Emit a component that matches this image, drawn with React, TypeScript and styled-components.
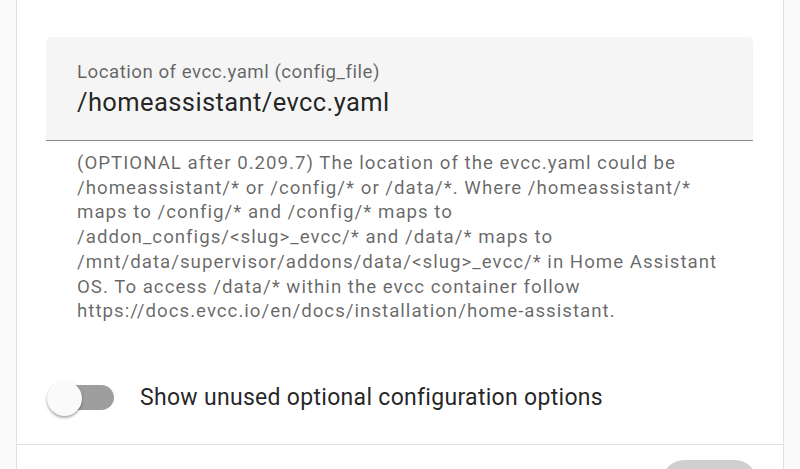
import React, { useState } from 'react';
import styled, { createGlobalStyle } from 'styled-components';

const GlobalStyle = createGlobalStyle`
  html, body {
    margin: 0;
    padding: 0;
    background: #fafafa;
    font-family: Roboto, 'Noto Sans', 'Liberation Sans', sans-serif;
    -webkit-font-smoothing: antialiased;
  }
`;

const PageStyled = styled.div`
  padding: 0 16px;
  height: 469px;
  overflow: hidden;
`;

const CardStyled = styled.div`
  background: #ffffff;
  border-left: 1px solid #e0e0e0;
  border-right: 1px solid #e0e0e0;
  height: 100%;
  display: flex;
  flex-direction: column;
`;

const CardContentStyled = styled.div`
  padding: 37px 30px 0 29px;
`;

const TextFieldStyled = styled.div`
  background: #f5f5f5;
  border-radius: 5px 5px 0 0;
  border-bottom: 1.5px solid #8a8a8a;
  height: 104px;
  box-sizing: border-box;
  padding: 24px 31px 0;
`;

const FieldLabelStyled = styled.div`
  font-size: 18.7px;
  letter-spacing: 0.5px;
  line-height: 22px;
  color: rgba(0, 0, 0, 0.6);
`;

const FieldValueStyled = styled.div`
  margin-top: 3px;
  font-size: 25.5px;
  letter-spacing: 0.4px;
  line-height: 32px;
  color: rgba(0, 0, 0, 0.87);
`;

const HelperTextStyled = styled.div`
  padding: 10px 0 0 31px;
  font-size: 18.7px;
  letter-spacing: 1px;
  line-height: 24.7px;
  color: rgba(0, 0, 0, 0.6);
`;

const ToggleRowStyled = styled.label`
  display: flex;
  align-items: center;
  gap: 26px;
  margin-top: 56px;
  padding-left: 1px;
  cursor: pointer;
`;

const SwitchStyled = styled.span`
  position: relative;
  width: 67px;
  height: 36px;
  flex: none;
  display: flex;
  align-items: center;
  justify-content: flex-end;
`;

const TrackStyled = styled.span<{ $on: boolean }>`
  width: 58px;
  height: 25px;
  border-radius: 13px;
  background: ${({ $on }) => ($on ? '#7fb5e6' : '#9e9e9e')};
`;

const ThumbStyled = styled.span<{ $on: boolean }>`
  position: absolute;
  top: 1px;
  left: ${({ $on }) => ($on ? '31px' : '0')};
  width: 35px;
  height: 35px;
  border-radius: 50%;
  background: ${({ $on }) => ($on ? '#03a9f4' : '#fafafa')};
  box-shadow: 0 2px 3px rgba(0, 0, 0, 0.25), 0 1px 2px rgba(0, 0, 0, 0.15);
`;

const ToggleTextStyled = styled.span`
  font-size: 23px;
  letter-spacing: 0.3px;
  color: rgba(0, 0, 0, 0.87);
`;

const FooterStyled = styled.div`
  margin-top: 28px;
  border-top: 1.5px solid #e0e0e0;
  display: flex;
  justify-content: flex-end;
  padding: 15px 26px 0 0;
`;

const SaveButtonStyled = styled.button`
  width: 95px;
  height: 44px;
  border: none;
  border-radius: 22px;
  background: #cfcfcf;
  font-family: inherit;
`;

const helperLines = [
  '(OPTIONAL after 0.209.7) The location of the evcc.yaml could be',
  '/homeassistant/* or /config/* or /data/*. Where /homeassistant/*',
  'maps to /config/* and /config/* maps to',
  '/addon_configs/<slug>_evcc/* and /data/* maps to',
  '/mnt/data/supervisor/addons/data/<slug>_evcc/* in Home Assistant',
  'OS. To access /data/* within the evcc container follow',
  'https://docs.evcc.io/en/docs/installation/home-assistant.',
];

export default function App() {
  const [showUnused, setShowUnused] = useState(false);
  return (
    <>
      <GlobalStyle />
      <PageStyled>
        <CardStyled>
          <CardContentStyled>
            <TextFieldStyled>
              <FieldLabelStyled>Location of evcc.yaml (config_file)</FieldLabelStyled>
              <FieldValueStyled>/homeassistant/evcc.yaml</FieldValueStyled>
            </TextFieldStyled>
            <HelperTextStyled>
              {helperLines.map((line, i) => (
                <React.Fragment key={i}>
                  {line}
                  {i < helperLines.length - 1 && <br />}
                </React.Fragment>
              ))}
            </HelperTextStyled>
            <ToggleRowStyled onClick={() => setShowUnused(!showUnused)}>
              <SwitchStyled>
                <TrackStyled $on={showUnused} />
                <ThumbStyled $on={showUnused} />
              </SwitchStyled>
              <ToggleTextStyled>Show unused optional configuration options</ToggleTextStyled>
            </ToggleRowStyled>
          </CardContentStyled>
          <FooterStyled>
            <SaveButtonStyled aria-label="Save" />
          </FooterStyled>
        </CardStyled>
      </PageStyled>
    </>
  );
}
